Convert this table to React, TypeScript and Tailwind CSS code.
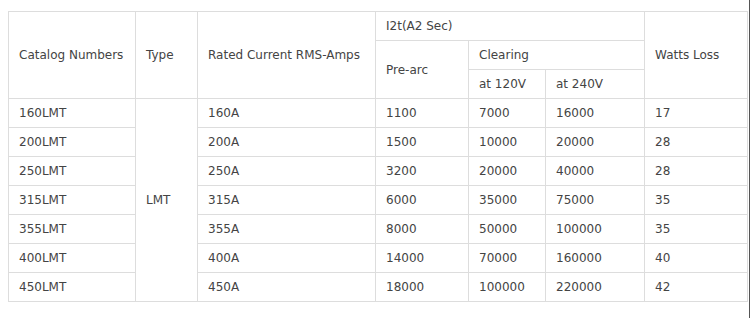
import React from "react";

const rows = [
  ["160LMT", "160A", "1100", "7000", "16000", "17"],
  ["200LMT", "200A", "1500", "10000", "20000", "28"],
  ["250LMT", "250A", "3200", "20000", "40000", "28"],
  ["315LMT", "315A", "6000", "35000", "75000", "35"],
  ["355LMT", "355A", "8000", "50000", "100000", "35"],
  ["400LMT", "400A", "14000", "70000", "160000", "40"],
  ["450LMT", "450A", "18000", "100000", "220000", "42"],
];

const cell = "border border-[#dddddd] px-[10px] h-[29px] p-0 align-middle text-left font-normal";

export default function App() {
  return (
    <div className="flex w-[750px] h-[318px] bg-white">
      <div className="flex-1 pl-2 pt-[11px]">
        <table
          className="table-fixed border-collapse w-[740px] text-[12px] leading-[14px] text-[#444444]"
          style={{ fontFamily: '"DejaVu Sans", Verdana, sans-serif' }}
        >
          <colgroup>
            <col className="w-[127px]" />
            <col className="w-[62px]" />
            <col className="w-[178px]" />
            <col className="w-[93px]" />
            <col className="w-[77px]" />
            <col className="w-[99px]" />
            <col className="w-[103px]" />
          </colgroup>
          <thead>
            <tr>
              <th rowSpan={3} className={cell}>Catalog Numbers</th>
              <th rowSpan={3} className={cell}>Type</th>
              <th rowSpan={3} className={cell}>Rated Current RMS-Amps</th>
              <th colSpan={3} className={cell}>I2t(A2 Sec)</th>
              <th rowSpan={3} className={cell}>Watts Loss</th>
            </tr>
            <tr>
              <th rowSpan={2} className={cell}>Pre-arc</th>
              <th colSpan={2} className={cell}>Clearing</th>
            </tr>
            <tr>
              <th className={cell}>at 120V</th>
              <th className={cell}>at 240V</th>
            </tr>
          </thead>
          <tbody>
            {rows.map((r, i) => (
              <tr key={i}>
                <td className={cell}>{r[0]}</td>
                {i === 0 && (
                  <td rowSpan={7} className={cell}>LMT</td>
                )}
                <td className={cell}>{r[1]}</td>
                <td className={cell}>{r[2]}</td>
                <td className={cell}>{r[3]}</td>
                <td className={cell}>{r[4]}</td>
                <td className={cell}>{r[5]}</td>
              </tr>
            ))}
          </tbody>
        </table>
      </div>
      <div className="w-px bg-[#555555]" />
    </div>
  );
}
